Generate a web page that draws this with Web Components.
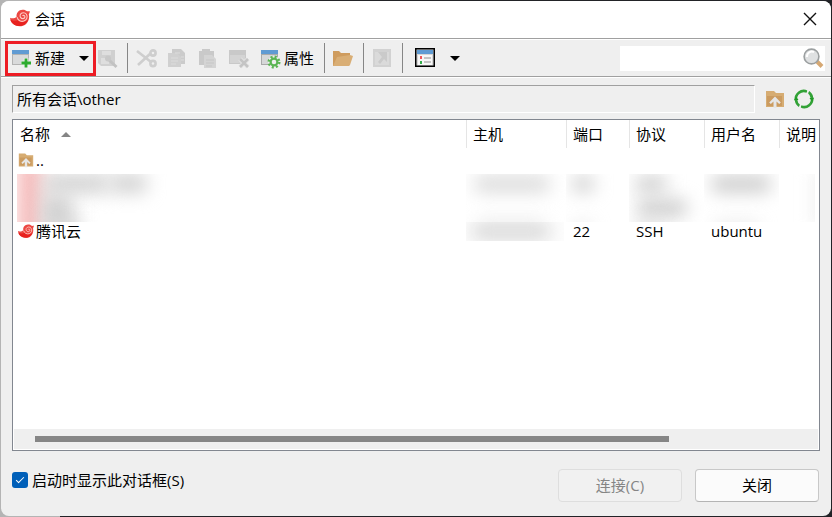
<!DOCTYPE html>
<html lang="zh-CN">
<head>
<meta charset="utf-8">
<title>会话</title>
<style>
html, body { height: 100%; }
body {
  margin: 0; padding: 1px; box-sizing: border-box; overflow: hidden;
  font: 15px/20px "Open Sans", "Noto Sans CJK SC", sans-serif; color: #000;
  background: linear-gradient(90deg, #b4b4b4 60px, #222327 60px);
}
</style>
</head>
<body>
<session-dialog>
  <title-bar slot="title">会话</title-bar>
  <tool-bar slot="tools">
    <tool-group marked>
      <tool-button icon="new">新建</tool-button>
      <tool-button icon="arrow" label="新建选项"></tool-button>
    </tool-group>
    <tool-group class="tight"><tool-button icon="find" label="另存为" disabled></tool-button></tool-group>
    <tool-separator></tool-separator>
    <tool-group>
      <tool-button icon="cut" label="剪切" disabled></tool-button>
      <tool-button icon="copy" label="复制" disabled></tool-button>
      <tool-button icon="paste" label="粘贴" disabled></tool-button>
      <tool-button icon="delete" label="删除" disabled></tool-button>
      <tool-button icon="props">属性</tool-button>
    </tool-group>
    <tool-separator></tool-separator>
    <tool-group><tool-button icon="folder" label="打开文件夹"></tool-button></tool-group>
    <tool-separator></tool-separator>
    <tool-group><tool-button icon="shortcut" label="快捷方式" disabled></tool-button></tool-group>
    <tool-separator></tool-separator>
    <tool-group class="view">
      <tool-button icon="view" label="视图"></tool-button>
      <tool-button icon="arrow" label="视图选项"></tool-button>
    </tool-group>
    <search-box slot="end"></search-box>
  </tool-bar>
  <path-bar>所有会话\other</path-bar>
  <session-list></session-list>
  <dialog-footer slot="footer">
    <check-option>启动时显示此对话框(S)</check-option>
    <dialog-button slot="actions" disabled>连接(C)</dialog-button>
    <dialog-button slot="actions">关闭</dialog-button>
  </dialog-footer>
</session-dialog>

<script>
const gray = '#d0d0d0';
const icons = {
  shell: `<path d="M0 8.800c2 .9 4.800.6 6.600-1C6 4 8.700.8 12.500.7c2-.1 3.300.6 4.500 1.500.9.300 1.800.2 2.600-.2.300 1.300-.1 2.300-.8 3.100 1 4-.2 8-3.300 10.400-2.500 2-6.500 2.400-9.800 1C2.500 15 .3 12 0 8.800z" fill="#ec4742"/><path d="M.3 10.500C3.500 12.300 6 12 8.300 11c2.700 2.500 6.700 2.200 9.700-.2-1 4-5 6.600-9.500 6.200C4 16.600 1 13.800.3 10.500z" fill="#e8221f"/><path d="M7 8.200c.8 3.200 4 4.900 6.900 3.900 3-1.100 4.100-4.400 2.500-6.800-1.600-2.200-5-2-6.100.3-.8 2 .6 4 2.500 4 1.800 0 2.600-1.700 1.800-2.700-.6-.8-1.600-.7-2 0" fill="none" stroke="#ffc9c2" stroke-width="1.100"/>`,
  new: `<path d="M0 2h17v15H0z" fill="#b3b3b3"/><path d="M1 7h15v9H1z" fill="#d9dadb"/><path d="M0 2h17v4H0z" fill="#609bd3"/><path d="M14 10v9M9.500 15h9.500" stroke="#efefef" stroke-width="4.600"/><path d="M14 10.500v9M9.500 15h9.500" stroke="#2dab2f" stroke-width="2.800"/>`,
  find: `<path d="M0 2h17v16H3l-3-3z" fill="${gray}"/><path d="M4 3h9v4H4zM3 10h8v6H3z" fill="#dedede"/><path d="M10 11l8.500 8" stroke="#c2c2c2" stroke-width="3"/><circle cx="10" cy="10.500" r="3" fill="#c8c8c8"/>`,
  cut: `<g fill="none" stroke="#cecece" stroke-width="2.600"><path d="M0 3l14 11M1 17L14 5"/><circle cx="16" cy="5" r="2.600"/><circle cx="16" cy="15.500" r="2.600"/></g>`,
  copy: `<path d="M4 1h9l4 4v11H4z" fill="#cbcbcb"/><path d="M0 5h9l4 4v10H0z" fill="#d0d0d0"/><path d="M7 5h5M13 9h3M13 12h3M3 10h7M3 13h7M3 16h5" stroke="#dcdcdc"/>`,
  paste: `<path d="M0 3h15v14H0z" fill="#c9c9c9"/><path d="M3 1h8v4H3z" fill="#c9c9c9"/><path d="M5 7h8l4 4v9H5z" fill="#d4d4d4"/><path d="M7 12h8M7 15h8M7 18h6" stroke="#c6c6c6"/>`,
  delete: `<path d="M-1 2h17v14H-1z" fill="#c9c9c9"/><path d="M0 7h15v8H0z" fill="#d4d4d4"/><path d="M10 11l8 8m0-8l-8 8" stroke="#e6e6e6" stroke-width="4.500"/><path d="M10 11l8 8m0-8l-8 8" stroke="#c4c4c4" stroke-width="2.600"/>`,
  props: `<path d="M0 2h17v15H0z" fill="#aaa"/><path d="M1 7h15v9H1z" fill="#d6d7d8"/><path d="M0 2h17v4H0z" fill="#609bd3"/><circle cx="13" cy="14" r="6" fill="#efefef"/><circle cx="13" cy="14" r="5.300" fill="none" stroke="#5bb553" stroke-width="2.400" stroke-dasharray="2.080"/><circle cx="13" cy="14" r="3.400" fill="none" stroke="#5bb553" stroke-width="2.200"/>`,
  folder: `<path d="M-1 3h6l2 2h9v5l-3 8H-1z" fill="#cf9c5e"/><path d="M3 9l13-2 3 1-3 9-1 1H-1z" fill="#d9ae75"/>`,
  shortcut: `<path d="M0 1h18v18H0z" fill="#d2d2d2"/><path d="M2 4h14v13H2z" fill="#dadada"/><path d="M5 4h9v10l-3-3-4 5-2-2 4-5z" fill="#cacaca"/>`,
  view: `<path d="M0 0h20v19H0z" fill="#000"/><path d="M1.500 1.500h17v16h-17z" fill="#d6d6d6"/><path d="M2 2h16v4H2z" fill="#609bd3"/><path d="M3 7h14v10H3z" fill="#f7f7f7"/><path d="M5 8h2v3H5z" fill="#f0575a"/><path d="M5 13h2v3H5z" fill="#35ae4d"/><path d="M9 10h7M9 14h7" stroke="#b4b4b4" stroke-width="1.500"/>`,
  search: `<path d="M14 13.500l5 5" stroke="#d6a873" stroke-width="4"/><circle cx="8.500" cy="8.500" r="7.400" fill="#dfe1e2" stroke="#9b9fa0" stroke-width="1.600"/><path d="M4 9a5 5 0 0 1 7-5" fill="none" stroke="#fff" stroke-width="2"/>`,
  up: `<path d="M1 2h8l2 2h8v14H1z" fill="#d6ac72"/><path d="M2 7h15v10H2z" fill="#cb9b60"/><path d="M10 7.500l5.800 6-1.600 1.600-2.700-2.600V19h-3v-6.500l-2.700 2.600-1.600-1.600z" fill="#e6e6e6"/>`,
  refresh: `<g fill="none" stroke="#33a237" stroke-width="2.600"><path d="M2 11.500A8 8 0 0 1 13 2.600"/><path d="M18 8.500A8 8 0 0 1 7 17.400"/><path d="M14.500 3.200a8 8 0 0 1 3.500 6"/><path d="M5.500 16.800a8 8 0 0 1-3.500-6"/></g><path d="M14 .5l-.5 5M6 19.500l.5-5" stroke="#efefef" stroke-width="1.200"/><path d="M15.500 9h4.500l-2 3.500zM0 11h4.500L2 7.500z" fill="#219a27"/>`,
  close: `<path d="M4 4l12 12M16 4L4 16" fill="none" stroke="#111" stroke-width="1.400"/>`,
  arrow: `<path d="M5 8h10l-5 5z" fill="#000"/>`,
  sort: `<path d="M5 13h10l-5-5z" fill="#858585"/>`
};

function element(name, html, setup) {
  const template = document.createElement('template');
  template.innerHTML = html;
  customElements.define(name, class extends HTMLElement {
    constructor() {
      super();
      this.attachShadow({ mode: 'open' }).append(template.content.cloneNode(true));
    }
    connectedCallback() { if (setup) setup(this, this.shadowRoot); }
  });
}

element('ui-icon', `<style>
  :host { display: block; flex: none; width: 20px; height: 20px; }
  :host([small]) { width: 16px; height: 16px; }
  svg { display: block; width: 100%; height: 100%; overflow: visible; }
</style><svg viewBox="0 0 20 20" aria-hidden="true"></svg>`,
  (host, root) => { root.querySelector('svg').innerHTML = icons[host.getAttribute('name')] || ''; });

element('session-dialog', `<style>
  :host { display: flex; flex-direction: column; height: 100%; box-sizing: border-box; overflow: hidden;
    border-radius: 8px; background: #efefef; }
  main { flex: 1; min-height: 0; display: flex; flex-direction: column; gap: 6px; padding: 8px 11px 0; }
</style><slot name="title"></slot><slot name="tools"></slot><main><slot></slot></main><slot name="footer"></slot>`);

element('title-bar', `<style>
  :host { display: flex; align-items: center; gap: 5px; height: 35px; padding: 0 11px 2px 9px; background: #fff;
    border-bottom: 1px solid #a0a0a0; }
  h1 { flex: 1; margin: 0; font: inherit; }
  button { padding: 0; border: 0; background: none; }
</style><ui-icon name="shell"></ui-icon><h1><slot></slot></h1><button aria-label="关闭窗口"><ui-icon name="close"></ui-icon></button>`);

element('tool-bar', `<style>
  :host { display: flex; align-items: center; height: 36px; padding: 0 6px 0 4px;
    border-top: 1px solid #fff; border-bottom: 1px solid #a0a0a0; box-shadow: 0 1px #fff; }
  .spacer { flex: 1; }
</style><slot></slot><div class="spacer"></div><slot name="end"></slot>`);

element('tool-group', `<style>
  :host { display: flex; align-items: center; gap: 11px; }
  :host([marked]) { box-sizing: border-box; width: 91px; height: 35px; padding-left: 4px; gap: 9px; border: 3px solid #ed1c24; }
  :host(.tight) { padding-left: 2px; }
  :host(.view) { gap: 10px; padding-left: 3px; }
</style><slot></slot>`);

element('tool-separator', `<style>
  :host { display: block; width: 1px; height: 30px; margin: 0 9px; background: #868686; }
</style>`);

element('tool-button', `<style>
  :host { display: block; flex: none; }
  button { display: flex; align-items: center; gap: 3px; padding: 0; border: 0; background: none; font: inherit; color: inherit; white-space: nowrap; }
  :host([icon="props"]) button { padding-right: 1px; }
</style><button><ui-icon></ui-icon><slot></slot></button>`,
  (host, root) => {
    const button = root.querySelector('button');
    root.querySelector('ui-icon').setAttribute('name', host.getAttribute('icon'));
    root.querySelector('ui-icon').connectedCallback();
    button.disabled = host.hasAttribute('disabled');
    if (host.hasAttribute('label')) button.setAttribute('aria-label', host.getAttribute('label'));
  });

element('search-box', `<style>
  :host { display: flex; align-items: center; width: 205px; height: 25px; background: #fff; }
  input { flex: 1; min-width: 0; padding: 0 4px; border: 0; outline: 0; background: none; font: inherit; }
  button { padding: 0 2px 0 0; border: 0; background: none; }
</style><input type="text" aria-label="搜索"><button aria-label="搜索"><ui-icon name="search"></ui-icon></button>`);

element('path-bar', `<style>
  :host { display: flex; align-items: center; gap: 9px; padding-right: 6px; }
  .path { flex: 1; box-sizing: border-box; height: 28px; padding: 3px 4px; margin-right: 1px;
    border: 1px solid; border-color: #a0a0a0 #fff #fff #a0a0a0; }
  button { padding: 0; border: 0; background: none; }
</style><div class="path"><slot></slot></div>
<button aria-label="上一级"><ui-icon name="up"></ui-icon></button>
<button aria-label="刷新"><ui-icon name="refresh"></ui-icon></button>`);

/* Hides private values behind soft grey patches; the shapes come from its "kind". */
element('blurred-cell', `<style>
  :host { display: block; position: relative; height: 48px; overflow: hidden; }
  :host([kind="single"]) { height: 19px; width: 98px; background: #fdfdfd; }
  i { position: absolute; border-radius: 6px; filter: blur(9px); background: #d4d4d4; }
</style>`, (host, root) => {
  const kinds = {
    name: [[0, -16, 26, 84, '#f6bcbc'], [26, 0, 66, 19, '#d2d2d2'], [92, 0, 38, 19, '#d2d2d2'], [24, 20, 32, 38, '#d2d2d2'], [30, 46, 34, 12]],
    host: [[8, 2, 76, 16, '#d9d9d9'], [10, 48, 70, 8, '#dcdcdc']],
    port: [[6, 2, 22, 16, '#cecece'], [6, 50, 20, 6, '#d8d8d8']],
    protocol: [[6, 2, 32, 16, '#cecece'], [8, 26, 50, 16, '#c9c9c9'], [6, 48, 30, 8]],
    user: [[7, 2, 60, 16, '#c9c9c9'], [10, 50, 45, 6, '#d8d8d8']],
    note: [[36, -6, 10, 60, '#e9e9e9']],
    single: [[6, 0, 78, 18, '#d8d8d8']]
  };
  for (const [x, y, w, h, color] of kinds[host.getAttribute('kind')]) {
    const patch = document.createElement('i');
    patch.style.cssText = `left:${x}px;top:${y}px;width:${w}px;height:${h}px;${color ? `background:${color}` : ''}`;
    root.append(patch);
  }
});

element('session-list', `<style>
  :host { flex: 1; min-height: 0; display: flex; flex-direction: column; border: 1px solid #828790; background: #fff; overflow: hidden; }
  .rows { flex: 1; min-height: 0; overflow: hidden; }
  table { width: 100%; table-layout: fixed; border-collapse: separate; border-spacing: 0; }
  th, td { padding: 0 0 0 7px; text-align: left; font-weight: 400; white-space: nowrap; overflow: hidden; }
  th { height: 28px; }
  th + th { padding-left: 6px; border-left: 1px solid #e5e5e5; }
  td:first-child { padding-left: 5px; }
  .up td { height: 24px; padding-bottom: 2px; }
  .hidden td { height: 24px; padding: 0; }
  .hidden td:first-child { padding-left: 4px; }
  .hidden td:last-child { padding-right: 4px; }
  .session td { height: 19px; line-height: 19px; }
  .session td.private { padding: 0; }
  .host { width: 100px; } .port { width: 63px; } .mid { width: 75px; } .note { width: 40px; }
  .line { display: flex; align-items: center; gap: 2px; }
  .sorted { gap: 6px; }
  .track { height: 20px; margin: 1px; background: #efefef; display: flex; align-items: center; padding-left: 21px; box-sizing: border-box; }
  .thumb { width: 81%; height: 6px; background: #868686; }
</style>
<div class="rows"><table>
  <colgroup><col><col class="host"><col class="port"><col class="mid"><col class="mid"><col class="note"></colgroup>
  <thead><tr><th><div class="line sorted">名称<ui-icon name="sort"></ui-icon></div></th><th>主机</th><th>端口</th><th>协议</th><th>用户名</th><th>说明</th></tr></thead>
  <tbody>
    <tr class="up"><td><div class="line"><ui-icon name="up" small></ui-icon>..</div></td><td></td><td></td><td></td><td></td><td></td></tr>
    <tr class="hidden">
      <td rowspan="2"><blurred-cell kind="name"></blurred-cell></td>
      <td rowspan="2"><blurred-cell kind="host"></blurred-cell></td>
      <td rowspan="2"><blurred-cell kind="port"></blurred-cell></td>
      <td rowspan="2"><blurred-cell kind="protocol"></blurred-cell></td>
      <td rowspan="2"><blurred-cell kind="user"></blurred-cell></td>
      <td rowspan="2"><blurred-cell kind="note"></blurred-cell></td>
    </tr>
    <tr class="hidden"></tr>
    <tr class="session"><td><div class="line"><ui-icon name="shell" small></ui-icon>腾讯云</div></td><td class="private"><blurred-cell kind="single"></blurred-cell></td><td>22</td><td>SSH</td><td>ubuntu</td><td></td></tr>
  </tbody>
</table></div>
<div class="track"><div class="thumb"></div></div>`);

element('dialog-footer', `<style>
  :host { display: flex; align-items: flex-start; justify-content: space-between; padding: 18px 12px 14px 11px; }
  .actions { display: flex; gap: 13px; }
</style><slot></slot><div class="actions"><slot name="actions"></slot></div>`);

element('check-option', `<style>
  :host { display: block; }
  label { display: flex; align-items: center; gap: 4px; height: 22px; }
  input { appearance: none; display: grid; place-items: center; flex: none; width: 16px; height: 16px; margin: 0; border-radius: 3px; background: #005fb8; }
  input:checked::before { content: ""; width: 7px; height: 3px; margin-bottom: 2px; border: solid #fff; border-width: 0 0 1px 1px; transform: rotate(-45deg); }
</style><label><input type="checkbox" checked><span><slot></slot></span></label>`);

element('dialog-button', `<style>
  :host { display: block; }
  button { width: 124px; height: 33px; padding: 0 0 2px; font: inherit; color: #000; background: #fbfbfb;
    border: 1px solid #c8c8c8; border-bottom-color: #b4b4b4; border-radius: 4px; }
  button:disabled { color: #858585; background: #f1f1f1; border-color: #dedede; }
</style><button><slot></slot></button>`,
  (host, root) => { root.querySelector('button').disabled = host.hasAttribute('disabled'); });
</script>
</body>
</html>
